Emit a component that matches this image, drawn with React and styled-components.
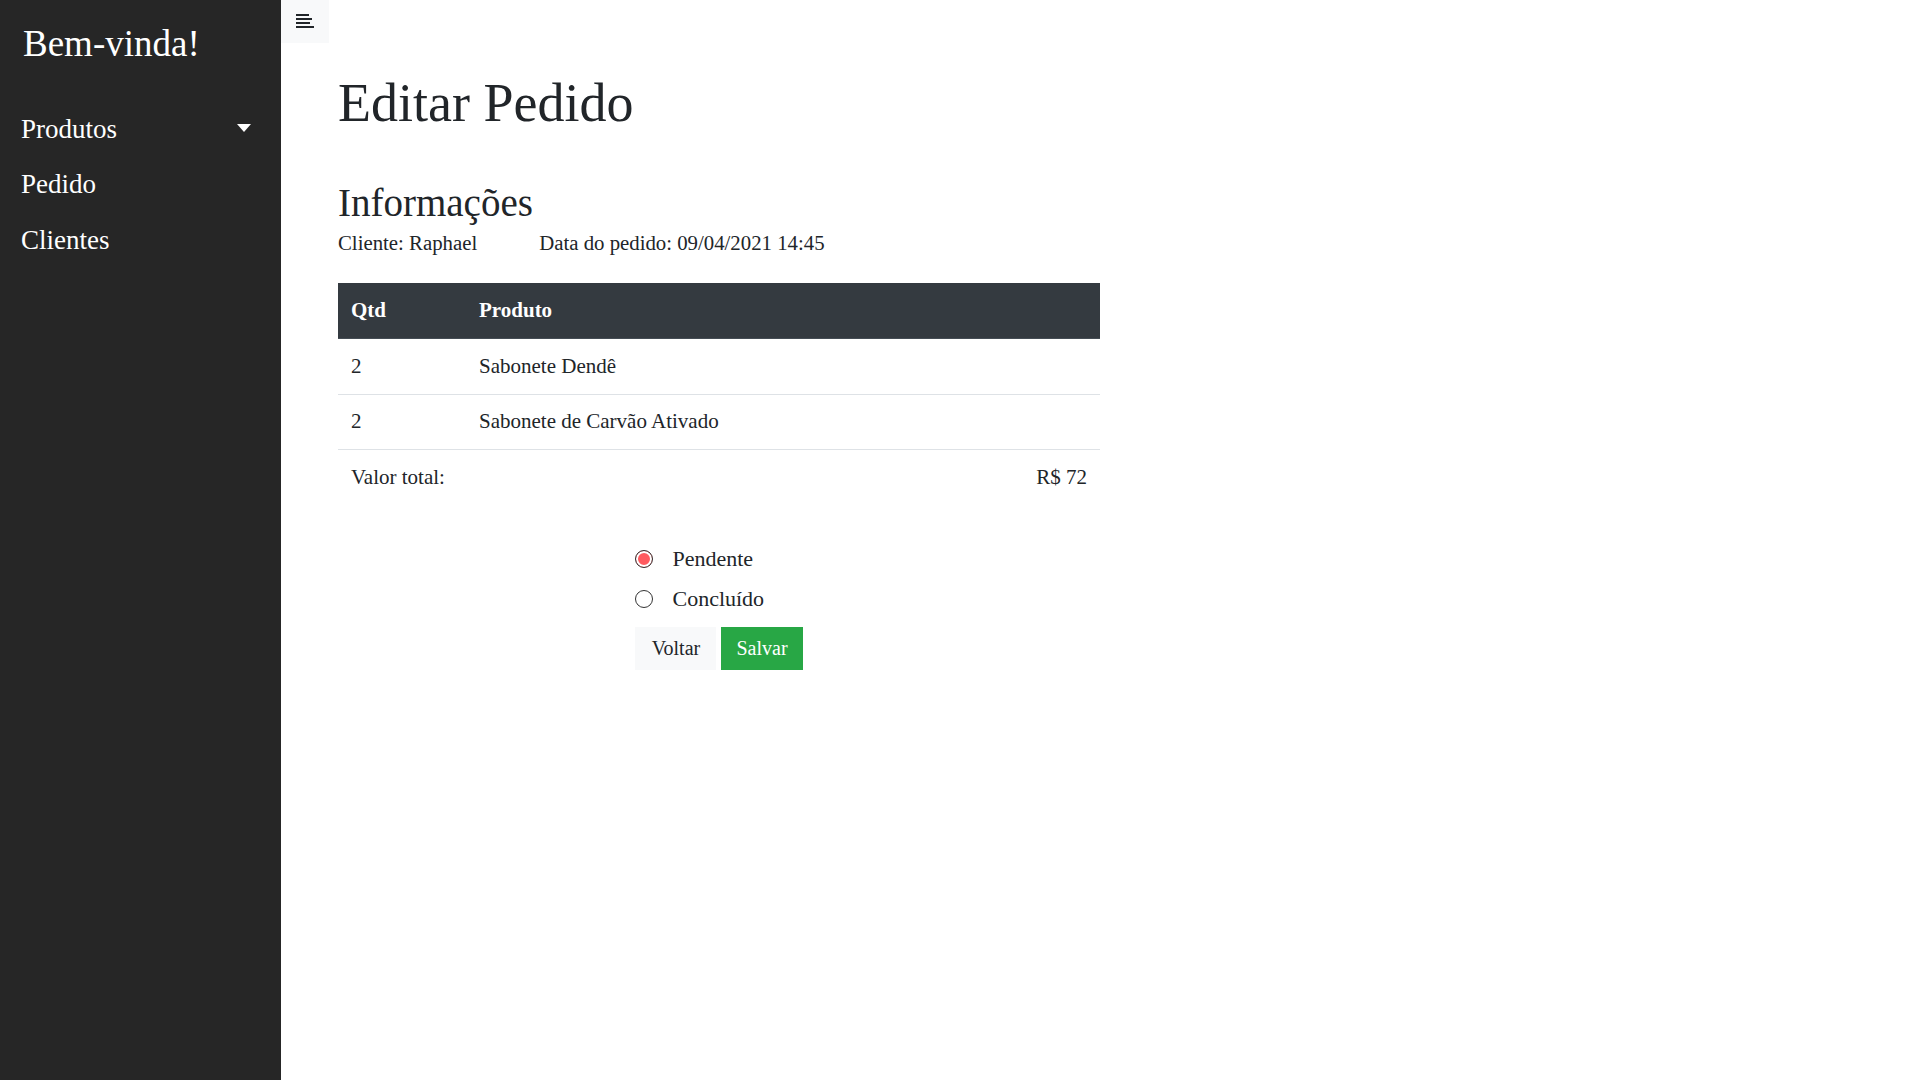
import React from "react";
import styled, { createGlobalStyle } from "styled-components";

const GlobalStyle = createGlobalStyle`
  body {
    margin: 0;
    font-family: "Liberation Serif", "Times New Roman", serif;
    color: #212529;
    background: #fff;
  }
  * {
    box-sizing: border-box;
  }
`;

const Layout = styled.div`
  display: flex;
  min-height: 100vh;
`;

const Sidebar = styled.nav`
  width: 281px;
  flex-shrink: 0;
  background: #262626;
  color: #fff;
  padding: 22px 0 0 0;
  .brand {
    font-size: 37px;
    line-height: 1.2;
    margin: 0 0 35px 23px;
    font-weight: 400;
  }
`;

const NavItem = styled.div`
  display: flex;
  align-items: center;
  justify-content: space-between;
  font-size: 27px;
  line-height: 40.5px;
  padding: 7.5px 30px 7.5px 21px;
  cursor: pointer;
`;

const Caret = styled.span`
  width: 0;
  height: 0;
  border-top: 8px solid #fff;
  border-left: 7.5px solid transparent;
  border-right: 7.5px solid transparent;
  margin-top: -3px;
`;

const Main = styled.main`
  flex: 1;
`;

const ToggleButton = styled.button`
  display: flex;
  align-items: center;
  justify-content: center;
  width: 48px;
  height: 43px;
  border: none;
  padding: 0;
  background: #f8f9fa;
  cursor: pointer;
`;

const Content = styled.div`
  padding: 28px 0 0 57px;
  width: 819px;
  h1 {
    font-size: 54px;
    font-weight: 400;
    line-height: 1.2;
    margin: 0 0 44px 0;
  }
  h3 {
    font-size: 39px;
    font-weight: 400;
    line-height: 1.2;
    margin: 0;
  }
`;

const InfoLine = styled.div`
  display: flex;
  gap: 62px;
  font-size: 20.8px;
  line-height: 1.5;
  margin-bottom: 25px;
`;

const Table = styled.table`
  width: 762px;
  border-collapse: collapse;
  font-size: 21px;
  line-height: 1.5;
  th,
  td {
    text-align: left;
    padding: 11.5px 13px;
    border-top: 1px solid #dee2e6;
  }
  th {
    background: #343a40;
    color: #fff;
    font-weight: 700;
    border-color: #343a40;
    border-bottom: 1px solid #454d55;
  }
  .qtd {
    width: 128px;
  }
  .right {
    text-align: right;
  }
`;

const FormBox = styled.div`
  display: flex;
  justify-content: center;
  width: 762px;
  margin-top: 38px;
`;

const FormInner = styled.div`
  display: flex;
  flex-direction: column;
  gap: 9px;
`;

const RadioRow = styled.label`
  display: flex;
  align-items: center;
  gap: 19px;
  font-size: 22px;
  line-height: 31.5px;
  font-weight: 500;
  cursor: pointer;
`;

const Radio = styled.input`
  appearance: none;
  margin: 0;
  width: 18px;
  height: 18px;
  border-radius: 50%;
  border: 1.5px solid #333;
  background: #fff;
  &:checked {
    background: #ff5a5f;
    box-shadow: inset 0 0 0 2px #fff;
  }
`;

const ButtonRow = styled.div`
  display: flex;
  gap: 5px;
  margin-top: 3px;
`;

const Button = styled.button`
  font-family: "Liberation Serif", "Times New Roman", serif;
  font-size: 20px;
  line-height: 31px;
  padding: 6px 15px;
  min-width: 81px;
  border: none;
  cursor: pointer;
  background: ${props => (props.primary ? "#28a745" : "#f8f9fa")};
  color: ${props => (props.primary ? "#fff" : "#212529")};
`;

const MenuIcon = () => (
  <svg width="20" height="16" viewBox="0 0 20 16">
    <rect x="1" y="0" width="13" height="2" fill="#212529" />
    <rect x="1" y="4" width="16" height="2" fill="#212529" />
    <rect x="1" y="8" width="14" height="2" fill="#212529" />
    <rect x="1" y="12" width="18" height="2" fill="#212529" />
  </svg>
);

const itens = [
  { qtd: 2, nome: "Sabonete Dendê" },
  { qtd: 2, nome: "Sabonete de Carvão Ativado" }
];

export default function App() {
  return (
    <>
      <GlobalStyle />
      <Layout>
        <Sidebar>
          <div className="brand">Bem-vinda!</div>
          <NavItem>
            Produtos
            <Caret />
          </NavItem>
          <NavItem>Pedido</NavItem>
          <NavItem>Clientes</NavItem>
        </Sidebar>
        <Main>
          <ToggleButton>
            <MenuIcon />
          </ToggleButton>
          <Content>
            <h1>Editar Pedido</h1>
            <h3>Informações</h3>
            <InfoLine>
              <span>Cliente: Raphael</span>
              <span>Data do pedido: 09/04/2021 14:45</span>
            </InfoLine>
            <Table>
              <thead>
                <tr>
                  <th className="qtd">Qtd</th>
                  <th>Produto</th>
                </tr>
              </thead>
              <tbody>
                {itens.map((item, i) => (
                  <tr key={i}>
                    <td>{item.qtd}</td>
                    <td>{item.nome}</td>
                  </tr>
                ))}
                <tr>
                  <td>Valor total:</td>
                  <td className="right">R$ 72</td>
                </tr>
              </tbody>
            </Table>
            <FormBox>
              <FormInner>
                <RadioRow>
                  <Radio type="radio" name="status" defaultChecked />
                  Pendente
                </RadioRow>
                <RadioRow>
                  <Radio type="radio" name="status" />
                  Concluído
                </RadioRow>
                <ButtonRow>
                  <Button>Voltar</Button>
                  <Button primary>Salvar</Button>
                </ButtonRow>
              </FormInner>
            </FormBox>
          </Content>
        </Main>
      </Layout>
    </>
  );
}
